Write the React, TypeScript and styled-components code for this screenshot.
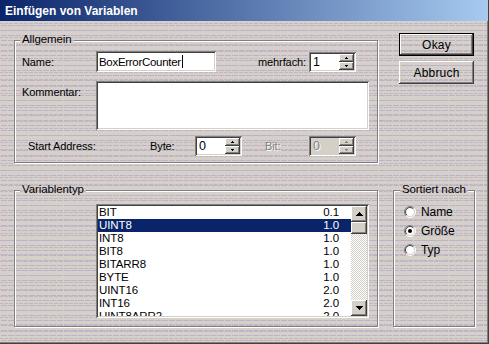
import React from 'react';
import styled, { createGlobalStyle, css } from 'styled-components';

const FACE = '#d4d0c8';

const Global = createGlobalStyle`
  html, body { margin: 0; padding: 0; background: ${FACE}; }
  body {
    font-family: "Liberation Sans", Arial, sans-serif;
    font-size: 11px;
    letter-spacing: -0.1px;
    color: #000;
  }
  * { box-sizing: border-box; }
`;

const dot = (c: string) => `conic-gradient(from 90deg at 1px 1px, transparent 75%, ${c} 0)`;

const dither = css`
  background-color: #d5d1ca;
  background-image: ${dot('#beb2c4')}, ${dot('#c1b5c6')};
  background-size: 7px 5px, 5px 7px;
  background-position: 0 0, 3px 2px;
  background-attachment: fixed;
`;

const raised = css`
  box-shadow:
    inset -1px -1px 0 #404040,
    inset 1px 1px 0 #ffffff,
    inset -2px -2px 0 #808080,
    inset 2px 2px 0 ${FACE};
`;

const sunken = css`
  box-shadow:
    inset 1px 1px 0 #808080,
    inset -1px -1px 0 #ffffff,
    inset 2px 2px 0 #404040,
    inset -2px -2px 0 ${FACE};
`;

const Window = styled.div`
  width: 489px;
  height: 344px;
  display: flex;
  flex-direction: column;
  ${dither}
  border-right: 1px solid #404040;
  border-bottom: 1px solid #404040;
  box-shadow: inset -1px -1px 0 #808080;
  overflow: hidden;
`;

const TitleBar = styled.div`
  flex: none;
  height: 21px;
  padding: 1px 0 0 5px;
  display: flex;
  align-items: center;
  background: linear-gradient(to right, #0a246a, #a6caf0);
  color: #fff;
  font-weight: bold;
  font-size: 12px;
  letter-spacing: 0;
`;

const Body = styled.div`
  display: grid;
  grid-template-columns: 364px 82px;
  column-gap: 15px;
  row-gap: 20px;
  padding: 12px 0 0 14px;
  align-items: start;
`;

const GroupBox = styled.div<{ $h: number }>`
  position: relative;
  margin-top: 7px;
  height: ${(p) => p.$h}px;
  border: 1px solid #808080;
  box-shadow: inset 1px 1px 0 #fff, 1px 1px 0 #fff;
`;

const Legend = styled.span<{ $x: number }>`
  position: absolute;
  top: -8px;
  left: ${(p) => p.$x}px;
  padding: 0 2px;
  line-height: 13px;
  font-size: 11.5px;
  ${dither}
`;

const GeneralContent = styled.div`
  padding: 10px 0 0 7px;
  display: flex;
  flex-direction: column;
`;

const Row = styled.div<{ $h: number; $mt?: number; $align?: string }>`
  display: flex;
  align-items: ${(p) => p.$align || 'center'};
  height: ${(p) => p.$h}px;
  margin-top: ${(p) => p.$mt || 0}px;
`;

const Label = styled.span<{ $w: number; $ml?: number; $pt?: number; $disabled?: boolean }>`
  flex: none;
  width: ${(p) => p.$w}px;
  margin-left: ${(p) => p.$ml || 0}px;
  padding-top: ${(p) => p.$pt || 0}px;
  white-space: nowrap;
  color: ${(p) => (p.$disabled ? '#808080' : '#000')};
  text-shadow: ${(p) => (p.$disabled ? '1px 1px 0 #fff' : 'none')};
`;

const EditBox = styled.div<{ $w: number; $h: number }>`
  flex: none;
  width: ${(p) => p.$w}px;
  height: ${(p) => p.$h}px;
  background: #fff;
  ${sunken}
  padding: 0 3px;
  display: flex;
  align-items: center;
  font-size: 11.5px;
  letter-spacing: -0.3px;
`;

const Caret = styled.span`
  display: inline-block;
  width: 1px;
  height: 13px;
  margin-left: 1px;
  background: #000;
`;

const SpinBox = styled.div<{ $disabled?: boolean }>`
  flex: none;
  width: 47px;
  height: 20px;
  padding: 2px;
  display: flex;
  align-items: stretch;
  background: ${(p) => (p.$disabled ? FACE : '#fff')};
  ${sunken}
`;

const SpinValue = styled.span<{ $disabled?: boolean }>`
  flex: 1;
  padding-left: 2px;
  display: flex;
  align-items: center;
  font-size: 12.5px;
  color: ${(p) => (p.$disabled ? '#808080' : '#000')};
  text-shadow: ${(p) => (p.$disabled ? '1px 1px 0 #fff' : 'none')};
`;

const SpinButtons = styled.div`
  flex: none;
  width: 15px;
  display: flex;
  flex-direction: column;
`;

const SpinBtn = styled.div`
  flex: 1;
  display: flex;
  align-items: center;
  justify-content: center;
  background: ${FACE};
  ${raised}
`;

const ListBox = styled.div`
  width: 273px;
  height: 114px;
  margin-left: 81px;
  padding: 2px;
  background: #fff;
  ${sunken}
  display: flex;
`;

const ListItems = styled.div`
  flex: 1;
  overflow: hidden;
`;

const ListRow = styled.div<{ $sel?: boolean }>`
  height: 13px;
  line-height: 13px;
  display: flex;
  justify-content: space-between;
  padding: 0 12px 0 1px;
  font-size: 11.5px;
  background: ${(p) => (p.$sel ? '#0a246a' : 'transparent')};
  color: ${(p) => (p.$sel ? '#fff' : '#000')};
`;

const ScrollBar = styled.div`
  flex: none;
  width: 16px;
  display: flex;
  flex-direction: column;
  background-color: #fff;
  background-image: conic-gradient(${FACE} 25%, transparent 0 50%, ${FACE} 0 75%, transparent 0);
  background-size: 2px 2px;
`;

const ScrollBtn = styled.div<{ $h: number; $push?: boolean }>`
  flex: none;
  height: ${(p) => p.$h}px;
  margin-top: ${(p) => (p.$push ? 'auto' : '0')};
  display: flex;
  align-items: center;
  justify-content: center;
  background: ${FACE};
  ${raised}
`;

const TypeContent = styled.div`
  padding: 13px 0 0 0;
`;

const ButtonStack = styled.div`
  display: flex;
  flex-direction: column;
  gap: 5px;
  padding-left: 6px;
`;

const Button = styled.div<{ $default?: boolean }>`
  width: 75px;
  height: 23px;
  display: flex;
  align-items: center;
  justify-content: center;
  ${dither}
  ${(p) =>
    p.$default
      ? css`
          border: 1px solid #000;
          box-shadow:
            inset -1px -1px 0 #404040,
            inset 1px 1px 0 #ffffff,
            inset -2px -2px 0 #808080;
        `
      : raised}
  font-size: 12px;
  letter-spacing: 0.2px;
`;

const RadioList = styled.div`
  display: flex;
  flex-direction: column;
  gap: 7px;
  padding: 15px 0 0 10px;
`;

const RadioRow = styled.div`
  display: flex;
  align-items: center;
  gap: 5px;
  height: 12px;
  font-size: 12px;
`;

const Radio = ({ checked }: { checked?: boolean }) => {
  const a = 6 - 5.5 * Math.SQRT1_2;
  const b = 6 + 5.5 * Math.SQRT1_2;
  const c = 6 - 4.5 * Math.SQRT1_2;
  const d = 6 + 4.5 * Math.SQRT1_2;
  return (
    <svg width="12" height="12" viewBox="0 0 12 12">
      <circle cx="6" cy="6" r="5" fill="#fff" />
      <path d={`M${a} ${b} A5.5 5.5 0 0 1 ${b} ${a}`} stroke="#808080" fill="none" />
      <path d={`M${b} ${a} A5.5 5.5 0 0 1 ${a} ${b}`} stroke="#fff" fill="none" />
      <path d={`M${c} ${d} A4.5 4.5 0 0 1 ${d} ${c}`} stroke="#404040" fill="none" />
      <path d={`M${d} ${c} A4.5 4.5 0 0 1 ${c} ${d}`} stroke={FACE} fill="none" />
      {checked && <circle cx="6" cy="6" r="2" fill="#000" />}
    </svg>
  );
};

const TinyArrow = ({ down, color = '#000' }: { down?: boolean; color?: string }) => (
  <svg width="3" height="2" viewBox="0 0 3 2" style={{ transform: down ? 'scaleY(-1)' : undefined }}>
    <rect x="1" y="0" width="1" height="1" fill={color} />
    <rect x="0" y="1" width="3" height="1" fill={color} />
  </svg>
);

const ScrollArrow = ({ down }: { down?: boolean }) => (
  <svg width="7" height="4" viewBox="0 0 7 4" style={{ transform: down ? 'scaleY(-1)' : undefined }}>
    <rect x="3" y="0" width="1" height="1" fill="#000" />
    <rect x="2" y="1" width="3" height="1" fill="#000" />
    <rect x="1" y="2" width="5" height="1" fill="#000" />
    <rect x="0" y="3" width="7" height="1" fill="#000" />
  </svg>
);

const Spinner = ({ value, disabled }: { value: string; disabled?: boolean }) => {
  const col = disabled ? '#808080' : '#000';
  return (
    <SpinBox $disabled={disabled}>
      <SpinValue $disabled={disabled}>{value}</SpinValue>
      <SpinButtons>
        <SpinBtn>
          <TinyArrow color={col} />
        </SpinBtn>
        <SpinBtn>
          <TinyArrow down color={col} />
        </SpinBtn>
      </SpinButtons>
    </SpinBox>
  );
};

const types: [string, string][] = [
  ['BIT', '0.1'],
  ['UINT8', '1.0'],
  ['INT8', '1.0'],
  ['BIT8', '1.0'],
  ['BITARR8', '1.0'],
  ['BYTE', '1.0'],
  ['UINT16', '2.0'],
  ['INT16', '2.0'],
  ['UINT8ARR2', '2.0'],
];

export default function App() {
  return (
    <>
      <Global />
      <Window>
        <TitleBar>Einfügen von Variablen</TitleBar>
        <Body>
          <GroupBox $h={123}>
            <Legend $x={5}>Allgemein</Legend>
            <GeneralContent>
              <Row $h={21}>
                <Label $w={74}>Name:</Label>
                <EditBox $w={120} $h={21}>
                  BoxErrorCounter
                  <Caret />
                </EditBox>
                <Label $w={51} $ml={42}>mehrfach:</Label>
                <Spinner value="1" />
              </Row>
              <Row $h={49} $mt={9} $align="flex-start">
                <Label $w={74} $pt={5}>Kommentar:</Label>
                <EditBox $w={273} $h={49} />
              </Row>
              <Row $h={20} $mt={6}>
                <Label $w={122} $ml={6}>Start Address:</Label>
                <Label $w={45}>Byte:</Label>
                <Spinner value="0" />
                <Label $w={44} $ml={23} $disabled>Bit:</Label>
                <Spinner value="0" disabled />
              </Row>
            </GeneralContent>
          </GroupBox>
          <ButtonStack>
            <Button $default>Okay</Button>
            <Button>Abbruch</Button>
          </ButtonStack>
          <GroupBox $h={137}>
            <Legend $x={5}>Variablentyp</Legend>
            <TypeContent>
              <ListBox>
                <ListItems>
                  {types.map(([n, s], i) => (
                    <ListRow key={n} $sel={i === 1}>
                      <span>{n}</span>
                      <span>{s}</span>
                    </ListRow>
                  ))}
                </ListItems>
                <ScrollBar>
                  <ScrollBtn $h={16}>
                    <ScrollArrow />
                  </ScrollBtn>
                  <ScrollBtn $h={12} />
                  <ScrollBtn $h={16} $push>
                    <ScrollArrow down />
                  </ScrollBtn>
                </ScrollBar>
              </ListBox>
            </TypeContent>
          </GroupBox>
          <GroupBox $h={137}>
            <Legend $x={6}>Sortiert nach</Legend>
            <RadioList>
              <RadioRow>
                <Radio />
                Name
              </RadioRow>
              <RadioRow>
                <Radio checked />
                Größe
              </RadioRow>
              <RadioRow>
                <Radio />
                Typ
              </RadioRow>
            </RadioList>
          </GroupBox>
        </Body>
      </Window>
    </>
  );
}
